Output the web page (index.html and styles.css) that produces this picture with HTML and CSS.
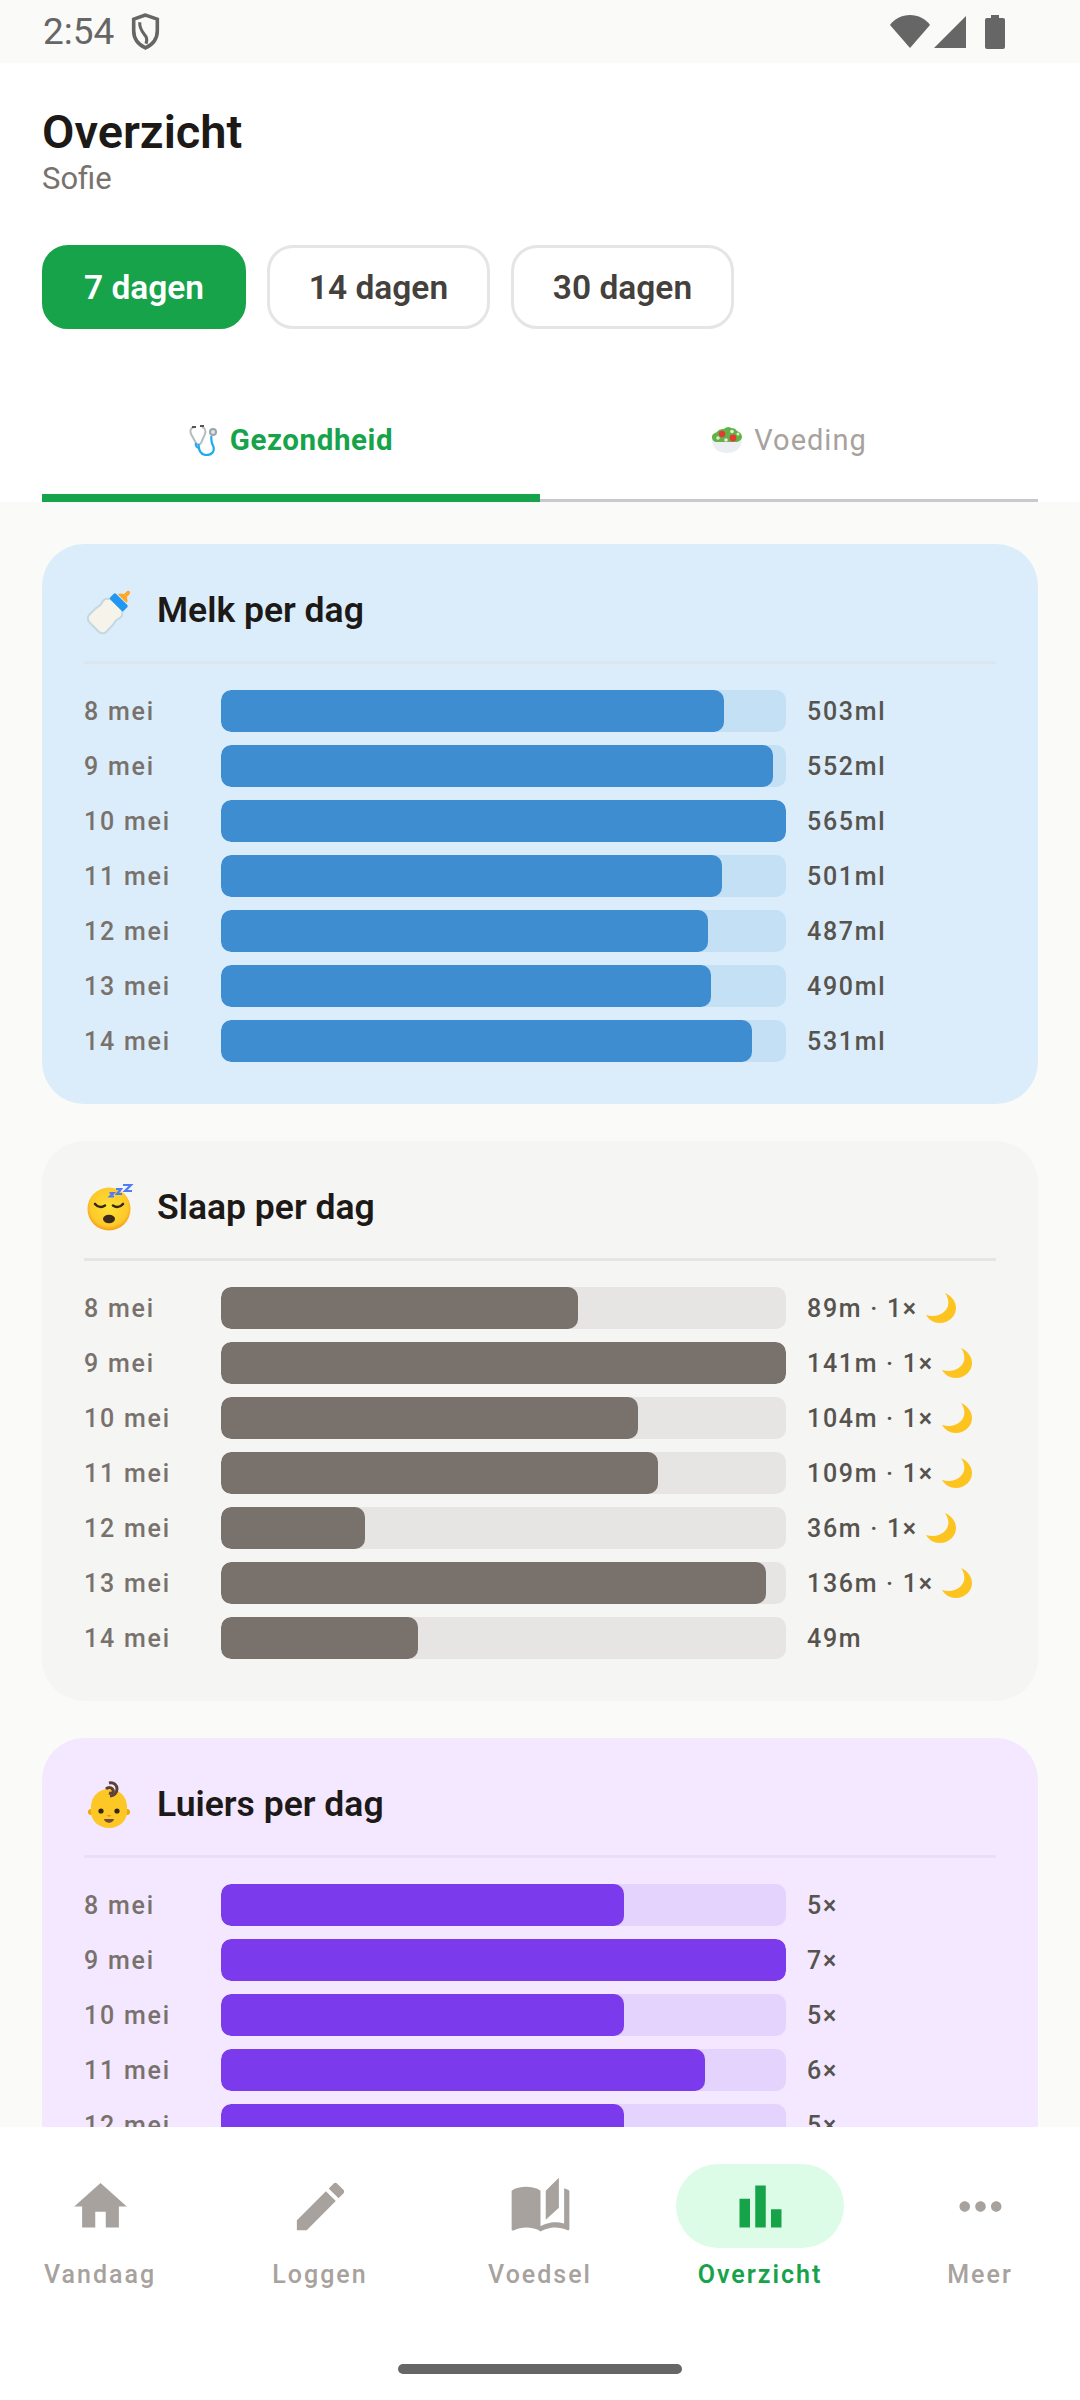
FILE: index.html
```html
<!DOCTYPE html>
<html lang="nl">
<head>
<meta charset="utf-8">
<title>Overzicht</title>
<link rel="stylesheet" href="styles.css">
</head>
<body>
<svg class="defs" width="0" height="0" aria-hidden="true">
  <defs>
    <radialGradient id="faceGrad" cx="50%" cy="45%" r="55%">
      <stop offset="0" stop-color="#fee133"/>
      <stop offset=".8" stop-color="#fdc92b"/>
      <stop offset="1" stop-color="#f59e12"/>
    </radialGradient>
    <symbol id="moon" viewBox="0 0 30 30">
      <path d="M19 0c5 7 4 14 0 18-5 5-12 6-19 4 3 5 8 8 14 8 9 0 16-7 16-15 0-6-4-12-11-15z" fill="#fdc31f"/>
    </symbol>
  </defs>
</svg>
<div class="app">
  <div class="statusbar">
    <div class="status-left">
      <span class="time">2:54</span>
      <svg class="shield" viewBox="0 0 29 36"><path d="M14.500 2 3 6v11c0 8 5 14 11.500 17C21 31 26 25 26 17V6z" fill="none" stroke="#666" stroke-width="3.500"/><path d="M9 9c-1 6 3 10 6 14 1 2 1 4 0 7" fill="none" stroke="#666" stroke-width="3"/></svg>
    </div>
    <div class="status-right">
      <svg class="wifi" viewBox="0 0 40 33"><path d="M20 33 0 10C4 4 12 0 20 0s16 4 20 10z" fill="#666"/></svg>
      <svg class="signal" viewBox="0 0 32 32"><path d="M32 0v32H0z" fill="#666"/></svg>
      <svg class="battery" viewBox="0 0 20 34"><path d="M6 0h8v3h4a2 2 0 0 1 2 2v27a2 2 0 0 1-2 2H2a2 2 0 0 1-2-2V5a2 2 0 0 1 2-2h4z" fill="#666"/></svg>
    </div>
  </div>

  <header class="header">
    <h1 class="title">Overzicht</h1>
    <p class="subtitle">Sofie</p>
    <div class="ranges">
      <button class="range range-active">7 dagen</button>
      <button class="range">14 dagen</button>
      <button class="range">30 dagen</button>
    </div>
    <div class="tabs">
      <div class="tab tab-active">
        <svg class="tab-emoji" viewBox="0 0 32 32"><path d="M5 3C1 4 1 7 2 10l5 9c1 2 4 2 5 0l4-9c1-3 0-6-3-7" fill="none" stroke="#b5bcc0" stroke-width="2"/><path d="M7 19c-1 3 1 5 4 5" fill="none" stroke="#1eaaf1" stroke-width="2.200"/><path d="M9.500 20c0 6 2 11 8 11s8-4 7-8c-1-3-3-5-2-11" fill="none" stroke="#1eaaf1" stroke-width="2.200"/><circle cx="24" cy="8" r="4" fill="#9aa5aa"/><circle cx="24" cy="8" r="2" fill="#dfe4e6"/><rect x="3" y="2" width="4" height="2" fill="#555"/><rect x="11" y="1" width="4" height="2" fill="#555"/></svg>
        <span>Gezondheid</span>
      </div>
      <div class="tab">
        <svg class="tab-emoji" viewBox="0 0 32 32"><path d="M1 15h30c0 9-6 14-15 14S1 24 1 15z" fill="#eceff1"/><path d="M1 13c0-3 3-4 5-5 2-3 5-3 7-3 2-2 5-3 7-1 3 0 5 1 6 3 3 1 5 3 5 6 0 3-4 5-6 5H6c-3 0-5-2-5-5z" fill="#63b246"/><circle cx="11" cy="10" r="3.200" fill="#e53935"/><circle cx="22" cy="14" r="3.400" fill="#e53935"/><circle cx="15" cy="16" r="1.800" fill="#f4e4ec"/><circle cx="21" cy="7.500" r="1.800" fill="#f4e4ec"/><circle cx="7" cy="14" r="1.800" fill="#dcedc8"/><circle cx="27" cy="10" r="1.500" fill="#dcedc8"/></svg>
        <span>Voeding</span>
      </div>
    </div>
  </header>

  <main class="content">
    <section class="card card-blue">
      <div class="card-head">
        <svg class="emoji" viewBox="0 0 50 48"><g transform="translate(3 1) rotate(45 24 23)"><path d="M12 18c0-2 3-3 4-5h16c1 2 4 3 4 5v2c0 2-1 3-1 5s1 4 1 6v9c0 3-3 5-6 5H18c-3 0-6-2-6-5v-9c0-2 1-4 1-6s-1-3-1-5z" transform="translate(0 2)" fill="#f5f3ea" stroke="#c3d8e0" stroke-width="2"/><rect x="14.500" y="8" width="19" height="8" rx="1.500" fill="#2196f3"/><path d="M18 8c0-3 3-3 4-5V0c0-3 4-3 4 0v3c1 2 4 2 4 5z" transform="translate(0 -1)" fill="#ffa726"/></g></svg>
        <h2 class="card-title">Melk per dag</h2>
      </div>
      <div class="rows">
        <div class="row"><span class="day">8 mei</span><div class="track"><div class="fill" style="width:89%"></div></div><span class="val">503ml</span></div>
        <div class="row"><span class="day">9 mei</span><div class="track"><div class="fill" style="width:97.700%"></div></div><span class="val">552ml</span></div>
        <div class="row"><span class="day">10 mei</span><div class="track"><div class="fill" style="width:100%"></div></div><span class="val">565ml</span></div>
        <div class="row"><span class="day">11 mei</span><div class="track"><div class="fill" style="width:88.700%"></div></div><span class="val">501ml</span></div>
        <div class="row"><span class="day">12 mei</span><div class="track"><div class="fill" style="width:86.200%"></div></div><span class="val">487ml</span></div>
        <div class="row"><span class="day">13 mei</span><div class="track"><div class="fill" style="width:86.700%"></div></div><span class="val">490ml</span></div>
        <div class="row"><span class="day">14 mei</span><div class="track"><div class="fill" style="width:94%"></div></div><span class="val">531ml</span></div>
      </div>
    </section>

    <section class="card card-grey">
      <div class="card-head">
        <svg class="emoji" viewBox="0 0 50 48"><circle cx="25" cy="26" r="21.500" fill="url(#faceGrad)"/><path d="M11 21c3 3.500 7 3.500 10 1.500M29 22.500c3 2 7 2 10-1.500" fill="none" stroke="#33261b" stroke-width="2.600" stroke-linecap="round"/><ellipse cx="25" cy="36" rx="6" ry="4.200" fill="#3b2a1e"/><path d="M25.500 10h4l-3.500 3.500h4M32 6h5l-4 5h5M39 2h8l-6 6h7" fill="none" stroke="#4f7df5" stroke-width="2.200"/></svg>
        <h2 class="card-title">Slaap per dag</h2>
      </div>
      <div class="rows">
        <div class="row"><span class="day">8 mei</span><div class="track"><div class="fill" style="width:63.100%"></div></div><span class="val">89m · 1× <svg class="moon"><use href="#moon"/></svg></span></div>
        <div class="row"><span class="day">9 mei</span><div class="track"><div class="fill" style="width:100%"></div></div><span class="val">141m · 1× <svg class="moon"><use href="#moon"/></svg></span></div>
        <div class="row"><span class="day">10 mei</span><div class="track"><div class="fill" style="width:73.800%"></div></div><span class="val">104m · 1× <svg class="moon"><use href="#moon"/></svg></span></div>
        <div class="row"><span class="day">11 mei</span><div class="track"><div class="fill" style="width:77.300%"></div></div><span class="val">109m · 1× <svg class="moon"><use href="#moon"/></svg></span></div>
        <div class="row"><span class="day">12 mei</span><div class="track"><div class="fill" style="width:25.500%"></div></div><span class="val">36m · 1× <svg class="moon"><use href="#moon"/></svg></span></div>
        <div class="row"><span class="day">13 mei</span><div class="track"><div class="fill" style="width:96.500%"></div></div><span class="val">136m · 1× <svg class="moon"><use href="#moon"/></svg></span></div>
        <div class="row"><span class="day">14 mei</span><div class="track"><div class="fill" style="width:34.800%"></div></div><span class="val">49m</span></div>
      </div>
    </section>

    <section class="card card-purple">
      <div class="card-head">
        <svg class="emoji" viewBox="0 0 50 48"><circle cx="7" cy="32" r="3" fill="#f2a600"/><circle cx="43" cy="32" r="3" fill="#f2a600"/><path d="M7 27C7 16 15 9 25 9s18 7 18 18v5c0 9-8 16-18 16S7 41 7 32z" fill="#fdc726"/><path d="M25 14c3 1 5-1 4-3-1-3-5-3-7-1" fill="none" stroke="#5d4037" stroke-width="3" transform="translate(0 -1)"/><path d="M25 3c5-1 8 2 8 6s-3 7-7 7" fill="none" stroke="#5d4037" stroke-width="3"/><circle cx="17" cy="31" r="2.600" fill="#33261b"/><circle cx="33" cy="31" r="2.600" fill="#33261b"/><path d="M22.500 35h5l-2.500 2z" fill="#f19020"/><path d="M20 39h10c-1 5-9 5-10 0z" fill="#6d4c41"/></svg>
        <h2 class="card-title">Luiers per dag</h2>
      </div>
      <div class="rows">
        <div class="row"><span class="day">8 mei</span><div class="track"><div class="fill" style="width:71.400%"></div></div><span class="val">5×</span></div>
        <div class="row"><span class="day">9 mei</span><div class="track"><div class="fill" style="width:100%"></div></div><span class="val">7×</span></div>
        <div class="row"><span class="day">10 mei</span><div class="track"><div class="fill" style="width:71.400%"></div></div><span class="val">5×</span></div>
        <div class="row"><span class="day">11 mei</span><div class="track"><div class="fill" style="width:85.700%"></div></div><span class="val">6×</span></div>
        <div class="row"><span class="day">12 mei</span><div class="track"><div class="fill" style="width:71.400%"></div></div><span class="val">5×</span></div>
      </div>
    </section>
  </main>

  <nav class="nav">
    <div class="nav-items">
      <div class="nav-item"><div class="nav-pill"><svg class="nav-icon" viewBox="0 0 24 24"><path d="M10 20v-6h4v6h5v-8h3L12 3 2 12h3v8z"/></svg></div><span class="nav-label">Vandaag</span></div>
      <div class="nav-item"><div class="nav-pill"><svg class="nav-icon" viewBox="0 0 24 24"><path d="M3 17.250V21h3.750L17.810 9.940l-3.750-3.750L3 17.250zM20.710 7.040c.39-.39.39-1.020 0-1.410l-2.340-2.340c-.39-.39-1.020-.39-1.410 0l-1.830 1.830 3.750 3.750 1.830-1.830z"/></svg></div><span class="nav-label">Loggen</span></div>
      <div class="nav-item"><div class="nav-pill"><svg class="nav-icon" viewBox="0 0 24 24"><path d="M19 1l-5 5v11l5-4.500V1zM1 6v14.650c0 .25.25.5.5.5.1 0 .15-.05.25-.05C3.100 20.450 5.050 20 6.500 20c1.950 0 4.050.4 5.500 1.500V6c-1.450-1.100-3.550-1.500-5.500-1.500S2.450 4.900 1 6zm22 13.500V6c-.6-.45-1.250-.75-2-1v13.500c-1.100-.35-2.300-.5-3.500-.5-1.700 0-4.150.65-5.500 1.500v2c1.350-.85 3.800-1.500 5.500-1.500 1.650 0 3.350.3 4.750 1.050.1.05.15.05.25.05.25 0 .5-.25.5-.5v-1.100z"/></svg></div><span class="nav-label">Voedsel</span></div>
      <div class="nav-item nav-active"><div class="nav-pill"><svg class="nav-icon" viewBox="0 0 24 24"><path d="M4 9h4v11H4zm12 4h4v7h-4zm-6-9h4v16h-4z"/></svg></div><span class="nav-label">Overzicht</span></div>
      <div class="nav-item"><div class="nav-pill"><svg class="nav-icon" viewBox="0 0 24 24"><path d="M6 10c-1.100 0-2 .9-2 2s.9 2 2 2 2-.9 2-2-.9-2-2-2zm12 0c-1.100 0-2 .9-2 2s.9 2 2 2 2-.9 2-2-.9-2-2-2zm-6 0c-1.100 0-2 .9-2 2s.9 2 2 2 2-.9 2-2-.9-2-2-2z"/></svg></div><span class="nav-label">Meer</span></div>
    </div>
    <div class="home-bar"></div>
  </nav>
</div>
</body>
</html>
```

FILE: styles.css
```css
* { box-sizing: border-box; }
html, body { margin: 0; padding: 0; }
body { font-family: Roboto, "Noto Sans", sans-serif; background: #fafaf9; }
.defs { display: block; height: 0; }
.app { width: 1080px; height: 2400px; display: flex; flex-direction: column; overflow: hidden; background: #fafaf9; }

.statusbar { height: 63px; flex: none; display: flex; justify-content: space-between; align-items: center; padding: 0 75px 0 43px; background: #fafaf8; }
.status-left { display: flex; align-items: center; gap: 16px; }
.time { font-size: 37px; color: #666; line-height: 40px; }
.shield { width: 31px; height: 37px; display: block; }
.status-right { display: flex; align-items: center; }
.wifi { width: 40px; height: 33px; margin-right: 4px; }
.signal { width: 32px; height: 32px; margin-right: 19px; }
.battery { width: 20px; height: 34px; }

.header { flex: none; height: 439px; background: #fff; padding: 44px 42px 0; display: flex; flex-direction: column; }
.title { margin: 0; font-size: 47px; line-height: 50px; font-weight: 600; color: #1c1917; }
.subtitle { margin: 0; font-size: 31px; line-height: 44px; color: #78716c; }
.ranges { display: flex; gap: 21px; margin-top: 44px; }
.range { height: 84px; width: 223px; border: 3px solid #e7e5e4; border-radius: 26px; background: #fff; color: #44403c; font-family: inherit; font-size: 33.500px; font-weight: 600; padding: 0; }
.range-active { width: 204px; background: #16a34a; border-color: #16a34a; color: #fff; }
.tabs { display: flex; margin-top: auto; }
.tab { flex: 1; height: 165px; padding-top: 44px; display: flex; align-items: center; justify-content: center; gap: 11px; font-size: 29px; color: #a8a29e; letter-spacing: 1px; border-bottom: 3px solid #cbc7d1; }
.tab-active { color: #16a34a; font-size: 29.500px; font-weight: 700; letter-spacing: .6px; gap: 9px; padding-top: 48px; border-bottom: 8px solid #16a34a; }
.tab-emoji { width: 32px; height: 32px; flex: none; }

.content { flex: 1; min-height: 0; overflow: hidden; padding: 42px 42px 0; display: flex; flex-direction: column; gap: 37px; }
.card { flex: none; padding: 42px; border-radius: 42px; }
.card-blue { background: #dbedfa; --bar: #3f8dd1; --track: #c4e0f5; --line: #dce6ef; }
.card-grey { background: #f5f5f4; --bar: #78716c; --track: #e7e5e4; --line: #e7e5e4; }
.card-purple { background: #f3e8ff; --bar: #7c3aed; --track: #e4d3fd; --line: #e7dff2; }
.card-head { height: 78px; padding-bottom: 28px; display: flex; align-items: center; gap: 23px; border-bottom: 3px solid var(--line); margin-bottom: 26px; }
.emoji { width: 50px; height: 48px; flex: none; overflow: visible; }
.card-title { margin: 0; font-size: 35.500px; line-height: 46px; font-weight: 600; color: #1c1917; }
.rows { display: flex; flex-direction: column; gap: 13px; }
.row { height: 42px; display: flex; align-items: center; }
.day { width: 137px; flex: none; font-size: 25px; font-weight: 500; letter-spacing: 1.800px; color: #78716c; }
.track { flex: 1; height: 42px; background: var(--track); border-radius: 10px; overflow: hidden; }
.fill { height: 100%; background: var(--bar); border-radius: 10px; }
.val { width: 189px; flex: none; margin-left: 21px; font-size: 25px; font-weight: 500; letter-spacing: 1.700px; color: #57534e; white-space: nowrap; display: flex; align-items: center; gap: 8px; }
.moon { width: 30px; height: 30px; flex: none; }

.nav { flex: none; height: 273px; background: #fff; position: relative; padding-top: 37px; }
.nav-items { display: flex; justify-content: center; gap: 52px; }
.nav-item { width: 168px; flex: none; display: flex; flex-direction: column; align-items: center; }
.nav-pill { width: 168px; height: 84px; border-radius: 42px; display: flex; align-items: center; justify-content: center; }
.nav-icon { width: 63px; height: 63px; fill: #a8a29e; display: block; }
.nav-label { margin-top: 5px; font-size: 25px; line-height: 44px; font-weight: 500; letter-spacing: 2px; color: #a8a29e; }
.nav-active .nav-pill { background: #dcfce7; }
.nav-active .nav-icon { fill: #16a34a; }
.nav-active .nav-label { color: #16a34a; font-weight: 600; letter-spacing: 2px; }
.home-bar { position: absolute; left: 398px; top: 237px; width: 284px; height: 10px; border-radius: 5px; background: #666; }
```
